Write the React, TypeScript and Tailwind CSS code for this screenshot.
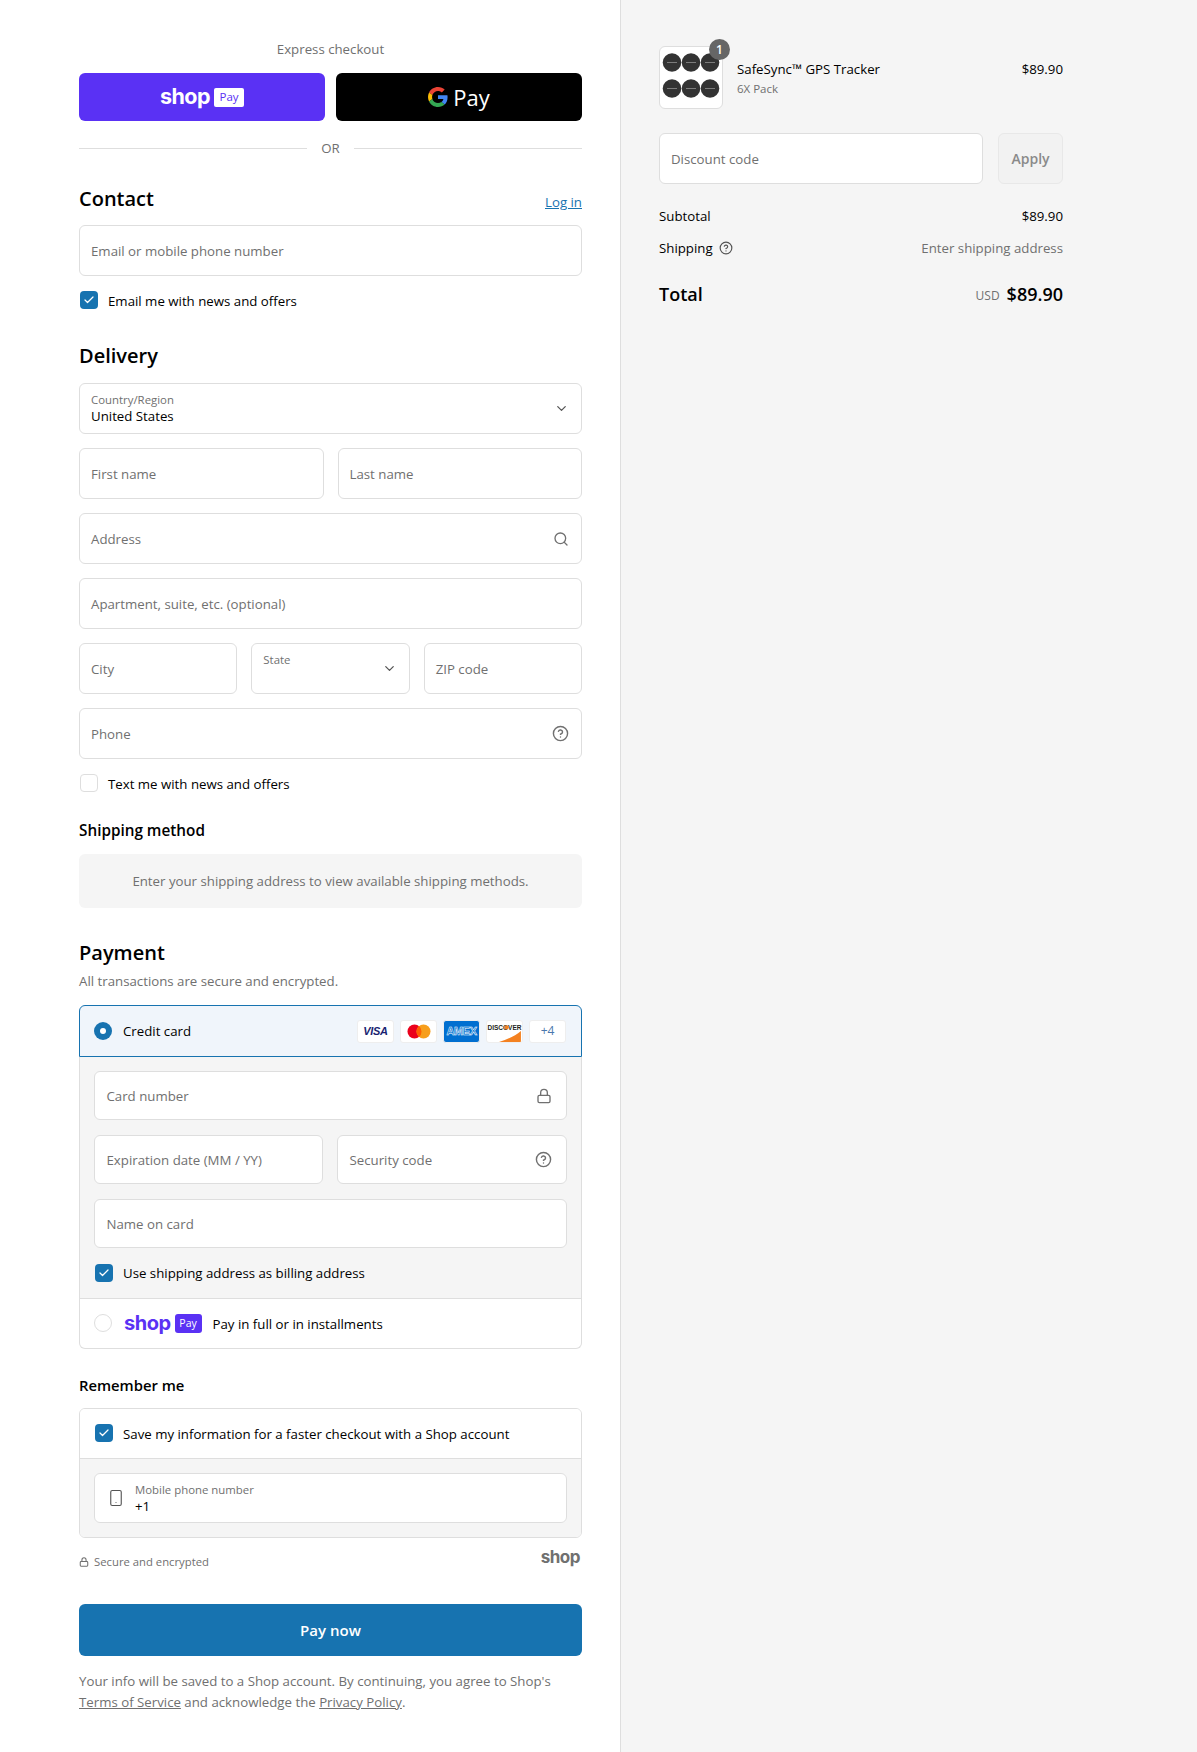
import React from "react";
import { ChevronDown, Search, CircleHelp, Lock, Smartphone, Check } from "lucide-react";

function Field({ label, icon, className = "" }: { label: string; icon?: React.ReactNode; className?: string }) {
  return (
    <div className={`flex items-center justify-between h-[51px] rounded-[6px] border border-[#dedede] bg-white pl-[11px] pr-[12px] text-[#707070] ${className}`}>
      <span>{label}</span>
      {icon}
    </div>
  );
}

function CardField({ label, icon, className = "" }: { label: string; icon?: React.ReactNode; className?: string }) {
  return (
    <div className={`flex items-center justify-between h-[49px] rounded-[6px] border border-[#dedede] bg-white pl-[11.5px] pr-[14px] text-[#707070] ${className}`}>
      <span>{label}</span>
      {icon}
    </div>
  );
}

function Box({ checked = true }: { checked?: boolean }) {
  return checked ? (
    <span className="flex items-center justify-center w-[18px] h-[18px] ml-px shrink-0 rounded-[4px] bg-[#1773b0] text-white">
      <Check size={12} strokeWidth={2.5} />
    </span>
  ) : (
    <span className="block w-[18px] h-[18px] ml-px shrink-0 rounded-[4px] border border-[#dedede] bg-white" />
  );
}

function ShopWord({ className = "" }: { className?: string }) {
  return <span className={`font-['Inter',sans-serif] font-bold tracking-[-0.5px] ${className}`}>shop</span>;
}

function GoogleG() {
  return (
    <svg viewBox="0 0 48 48" className="w-[20px] h-[20px]">
      <path fill="#EA4335" d="M24 9.5c3.54 0 6.71 1.22 9.21 3.6l6.85-6.85C35.9 2.38 30.47 0 24 0 14.62 0 6.51 5.38 2.56 13.22l7.98 6.19C12.43 13.72 17.74 9.5 24 9.5z" />
      <path fill="#4285F4" d="M46.98 24.55c0-1.57-.15-3.09-.38-4.55H24v9.02h12.94c-.58 2.96-2.26 5.48-4.78 7.18l7.73 6c4.51-4.18 7.09-10.36 7.09-17.65z" />
      <path fill="#FBBC05" d="M10.53 28.59c-.48-1.45-.76-2.99-.76-4.59s.27-3.14.76-4.59l-7.98-6.19C.92 16.46 0 20.12 0 24c0 3.88.92 7.54 2.56 10.78l7.97-6.19z" />
      <path fill="#34A853" d="M24 48c6.48 0 11.93-2.13 15.89-5.81l-7.73-6c-2.15 1.45-4.92 2.3-8.16 2.3-6.26 0-11.57-4.22-13.47-9.91l-7.98 6.19C6.51 42.62 14.62 48 24 48z" />
    </svg>
  );
}

function Heading({ children, className = "" }: { children: React.ReactNode; className?: string }) {
  return <h2 className={`h-[28px] leading-[28px] text-[20px] font-semibold text-black ${className}`}>{children}</h2>;
}

function Thumb() {
  const xs = [12, 31, 50];
  const ys = [15.5, 41.5];
  return (
    <svg viewBox="0 0 62 61" className="w-[62px] h-[61px]">
      {ys.map((y) =>
        xs.map((x) => (
          <g key={`${x}-${y}`}>
            <circle cx={x} cy={y} r="9.3" fill="#333333" />
            <rect x={x - 5} y={y - 0.5} width="10" height="1" fill="#7c7c7c" />
          </g>
        ))
      )}
    </svg>
  );
}

function CardLogo({ children, className = "" }: { children?: React.ReactNode; className?: string }) {
  return (
    <span className={`flex items-center justify-center w-[37px] h-[23px] rounded-[3px] border border-[#eeeeee] overflow-hidden ${className}`}>
      {children}
    </span>
  );
}

export default function App() {
  return (
    <div className="flex w-full min-h-[1752px] bg-white text-[13.25px] leading-[20px] text-black font-['Open_Sans',sans-serif]">
      <main className="w-[621px] shrink-0 border-r border-[#dedede] pl-[79px] pr-[38px] pt-[39px]">
        <p className="h-[21px] leading-[21px] text-center text-[#707070]">Express checkout</p>

        <div className="grid grid-cols-2 gap-[11px] mt-[13px]">
          <div className="flex items-center justify-center gap-[4px] h-[48px] rounded-[6px] bg-[#5a31f4] text-white">
            <ShopWord className="text-[21.5px] leading-[24px] pb-[2px]" />
            <span className="flex items-center justify-center w-[30px] h-[19px] rounded-[2px] bg-white text-[#5a31f4] text-[11.5px] font-medium">Pay</span>
          </div>
          <div className="flex items-center justify-center gap-[5px] h-[48px] rounded-[6px] bg-black text-white">
            <GoogleG />
            <span className="text-[22px] leading-[26px] font-normal">Pay</span>
          </div>
        </div>

        <div className="flex items-center gap-[14px] h-[20px] mt-[17px] text-[#707070]">
          <span className="flex-1 h-px bg-[#dedede]" />
          <span>OR</span>
          <span className="flex-1 h-px bg-[#dedede]" />
        </div>

        <div className="flex items-center justify-between mt-[27px]">
          <Heading>Contact</Heading>
          <a className="text-[#1773b0] underline pt-[5px]">Log in</a>
        </div>
        <Field label="Email or mobile phone number" className="mt-[12px]" />
        <label className="flex items-center gap-[10px] mt-[15px] h-[18px]">
          <Box />
          <span className="pt-px">Email me with news and offers</span>
        </label>

        <Heading className="mt-[33px]">Delivery</Heading>
        <div className="flex flex-col gap-[14px] mt-[13px]">
          <div className="flex items-center justify-between h-[51px] rounded-[6px] border border-[#dedede] pl-[11px] pr-[12px]">
            <div className="flex flex-col">
              <span className="text-[11.4px] leading-[15px] text-[#707070]">Country/Region</span>
              <span className="leading-[18px]">United States</span>
            </div>
            <ChevronDown size={15} className="text-[#545454]" />
          </div>
          <div className="grid grid-cols-2 gap-[14px]">
            <Field label="First name" />
            <Field label="Last name" />
          </div>
          <Field label="Address" icon={<Search size={16} className="text-[#707070]" />} />
          <Field label="Apartment, suite, etc. (optional)" />
          <div className="grid grid-cols-3 gap-[14px]">
            <Field label="City" />
            <div className="flex justify-between h-[51px] rounded-[6px] border border-[#dedede] pl-[11px] pr-[12px]">
              <span className="text-[11.4px] leading-[15px] text-[#707070] pt-[8px]">State</span>
              <ChevronDown size={15} className="text-[#545454] self-center" />
            </div>
            <Field label="ZIP code" />
          </div>
          <Field label="Phone" icon={<CircleHelp size={17} className="text-[#707070]" />} />
        </div>
        <label className="flex items-center gap-[10px] mt-[15px] h-[18px]">
          <Box checked={false} />
          <span className="pt-px">Text me with news and offers</span>
        </label>

        <h3 className="h-[24px] leading-[24px] text-[15.3px] font-semibold mt-[26px]">Shipping method</h3>
        <div className="flex items-center justify-center h-[54px] mt-[12px] rounded-[6px] bg-[#f5f5f5] text-[#707070]">
          Enter your shipping address to view available shipping methods.
        </div>

        <Heading className="mt-[31px]">Payment</Heading>
        <p className="mt-[4px] text-[#707070]">All transactions are secure and encrypted.</p>

        <div className="mt-[14px]">
          <div className="flex items-center justify-between h-[52px] rounded-t-[6px] border border-[#1773b0] bg-[#f0f5fb] pl-[14px] pr-[15px]">
            <div className="flex items-center gap-[11px]">
              <span className="flex items-center justify-center w-[18px] h-[18px] rounded-full bg-[#1773b0]">
                <span className="block w-[6px] h-[6px] rounded-full bg-white" />
              </span>
              <span>Credit card</span>
            </div>
            <div className="flex items-center gap-[6px]">
              <CardLogo className="bg-white">
                <span className="font-['Liberation_Sans',sans-serif] text-[11px] font-bold italic tracking-[-0.3px] text-[#1a1f71]">VISA</span>
              </CardLogo>
              <CardLogo className="bg-white">
                <svg viewBox="0 0 24 15" className="w-[24px] h-[15px]">
                  <circle cx="7.5" cy="7.5" r="7" fill="#eb001b" />
                  <circle cx="16.5" cy="7.5" r="7" fill="#f79e1b" />
                  <path d="M12 2.1a7 7 0 0 1 0 10.8a7 7 0 0 1 0-10.8z" fill="#ff5f00" />
                </svg>
              </CardLogo>
              <CardLogo className="bg-[#016fd0] border-[#016fd0]">
                <span className="font-['Liberation_Sans',sans-serif] text-[11px] font-bold tracking-[-0.4px] text-transparent [-webkit-text-stroke:0.5px_#ffffff]">AMEX</span>
              </CardLogo>
              <span className="relative flex justify-center w-[37px] h-[23px] rounded-[3px] border border-[#eeeeee] bg-white overflow-hidden">
                <span className="font-['Liberation_Sans',sans-serif] text-[6.5px] leading-[14px] font-bold text-[#231f20]">DISCOVER</span>
                <svg viewBox="0 0 36 23" className="absolute inset-0 w-full h-full">
                  <path d="M12 23C22 20 30 16 36 11V23Z" fill="#f48120" />
                  <circle cx="20.2" cy="7" r="2.4" fill="#f48120" />
                </svg>
              </span>
              <CardLogo className="bg-white text-[#4a78ad] text-[12px]">+4</CardLogo>
            </div>
          </div>

          <div className="bg-[#f5f5f5] border-x border-b border-[#dedede] px-[14px] pt-[14px] pb-[16px]">
            <CardField label="Card number" icon={<Lock size={16} className="text-[#707070]" />} />
            <div className="grid grid-cols-[229px_1fr] gap-[14px] mt-[15px]">
              <CardField label="Expiration date (MM / YY)" />
              <CardField label="Security code" icon={<CircleHelp size={17} className="text-[#707070]" />} />
            </div>
            <CardField label="Name on card" className="mt-[15px]" />
            <label className="flex items-center gap-[10px] mt-[15.5px] h-[18px]">
              <Box />
              <span className="pt-px">Use shipping address as billing address</span>
            </label>
          </div>

          <div className="flex items-center h-[50px] rounded-b-[6px] border-x border-b border-[#dedede] bg-white pl-[14px]">
            <span className="block w-[18px] h-[18px] rounded-full border border-[#dedede]" />
            <ShopWord className="ml-[12px] text-[20px] leading-[24px] text-[#5a31f4] pb-[1px]" />
            <span className="flex items-center justify-center w-[27px] h-[19px] ml-[4px] rounded-[3px] bg-[#5a31f4] text-white text-[10.5px] font-medium">Pay</span>
            <span className="ml-[11px] pt-px">Pay in full or in installments</span>
          </div>
        </div>

        <h3 className="h-[24px] leading-[24px] text-[14.8px] font-semibold mt-[24px]">Remember me</h3>
        <div className="mt-[11px] rounded-[6px] border border-[#dedede] overflow-hidden">
          <label className="flex items-center gap-[10px] h-[50px] pl-[14px] bg-white border-b border-[#dedede]">
            <Box />
            <span className="pt-px">Save my information for a faster checkout with a Shop account</span>
          </label>
          <div className="bg-[#f5f5f5] px-[14px] pt-[14px] pb-[14px]">
            <div className="flex items-center gap-[10px] h-[50px] rounded-[6px] border border-[#dedede] bg-white pl-[12px]">
              <Smartphone size={18} strokeWidth={1.5} className="text-[#545454]" />
              <div className="flex flex-col pt-px">
                <span className="text-[11.4px] leading-[15px] text-[#707070]">Mobile phone number</span>
                <span className="leading-[18px]">+1</span>
              </div>
            </div>
          </div>
        </div>

        <div className="flex items-start justify-between mt-[11px]">
          <div className="flex items-center gap-[5px] mt-[3px] h-[20px] text-[11.3px] text-[#707070]">
            <Lock size={10} strokeWidth={2.5} />
            <span>Secure and encrypted</span>
          </div>
          <ShopWord className="text-[17px] leading-[16px] text-[#707070] pr-[2px]" />
        </div>

        <button className="block w-full h-[52px] mt-[32px] rounded-[6px] bg-[#1773b0] text-white text-[15px] font-semibold">Pay now</button>

        <p className="mt-[15px] leading-[21px] text-[#707070]">
          Your info will be saved to a Shop account. By continuing, you agree to Shop's{" "}
          <a className="underline">Terms of Service</a> and acknowledge the <a className="underline">Privacy Policy</a>.
        </p>
      </main>

      <aside className="flex-1 bg-[#f5f5f5] pl-[38px] pr-[134px] pt-[46px]">
        <div className="flex items-center">
          <div className="relative w-[64px] h-[63px] rounded-[6px] border border-[#dedede] bg-white">
            <Thumb />
            <span className="absolute -top-[8px] -right-[8px] flex items-center justify-center w-[21px] h-[21px] rounded-full bg-[#666666] text-white text-[12px] font-semibold">1</span>
          </div>
          <div className="flex flex-col ml-[14px] pt-[2px]">
            <span className="leading-[20px]">SafeSync™ GPS Tracker</span>
            <span className="text-[11.5px] leading-[20px] text-[#707070]">6X Pack</span>
          </div>
          <span className="ml-auto -mt-[18px]">$89.90</span>
        </div>

        <div className="flex gap-[15px] mt-[24px]">
          <div className="flex flex-1 items-center h-[51px] rounded-[6px] border border-[#dedede] bg-white pl-[11px] text-[#707070]">Discount code</div>
          <div className="flex items-center justify-center w-[65px] h-[51px] rounded-[6px] border border-[#e8e8e8] bg-[#f2f2f2] text-[14px] font-semibold text-[#8a8a8a]">Apply</div>
        </div>

        <div className="flex justify-between h-[20px] mt-[22px]">
          <span>Subtotal</span>
          <span>$89.90</span>
        </div>
        <div className="flex justify-between h-[20px] mt-[12px]">
          <span className="flex items-center gap-[6px]">
            Shipping <CircleHelp size={14} className="text-[#545454]" />
          </span>
          <span className="text-[#707070]">Enter shipping address</span>
        </div>
        <div className="flex items-center justify-between h-[28px] mt-[22px]">
          <span className="text-[18px] font-semibold">Total</span>
          <span className="flex items-center gap-[7px]">
            <span className="text-[12px] text-[#707070] pt-[3px]">USD</span>
            <span className="text-[18px] font-semibold">$89.90</span>
          </span>
        </div>
      </aside>
    </div>
  );
}
